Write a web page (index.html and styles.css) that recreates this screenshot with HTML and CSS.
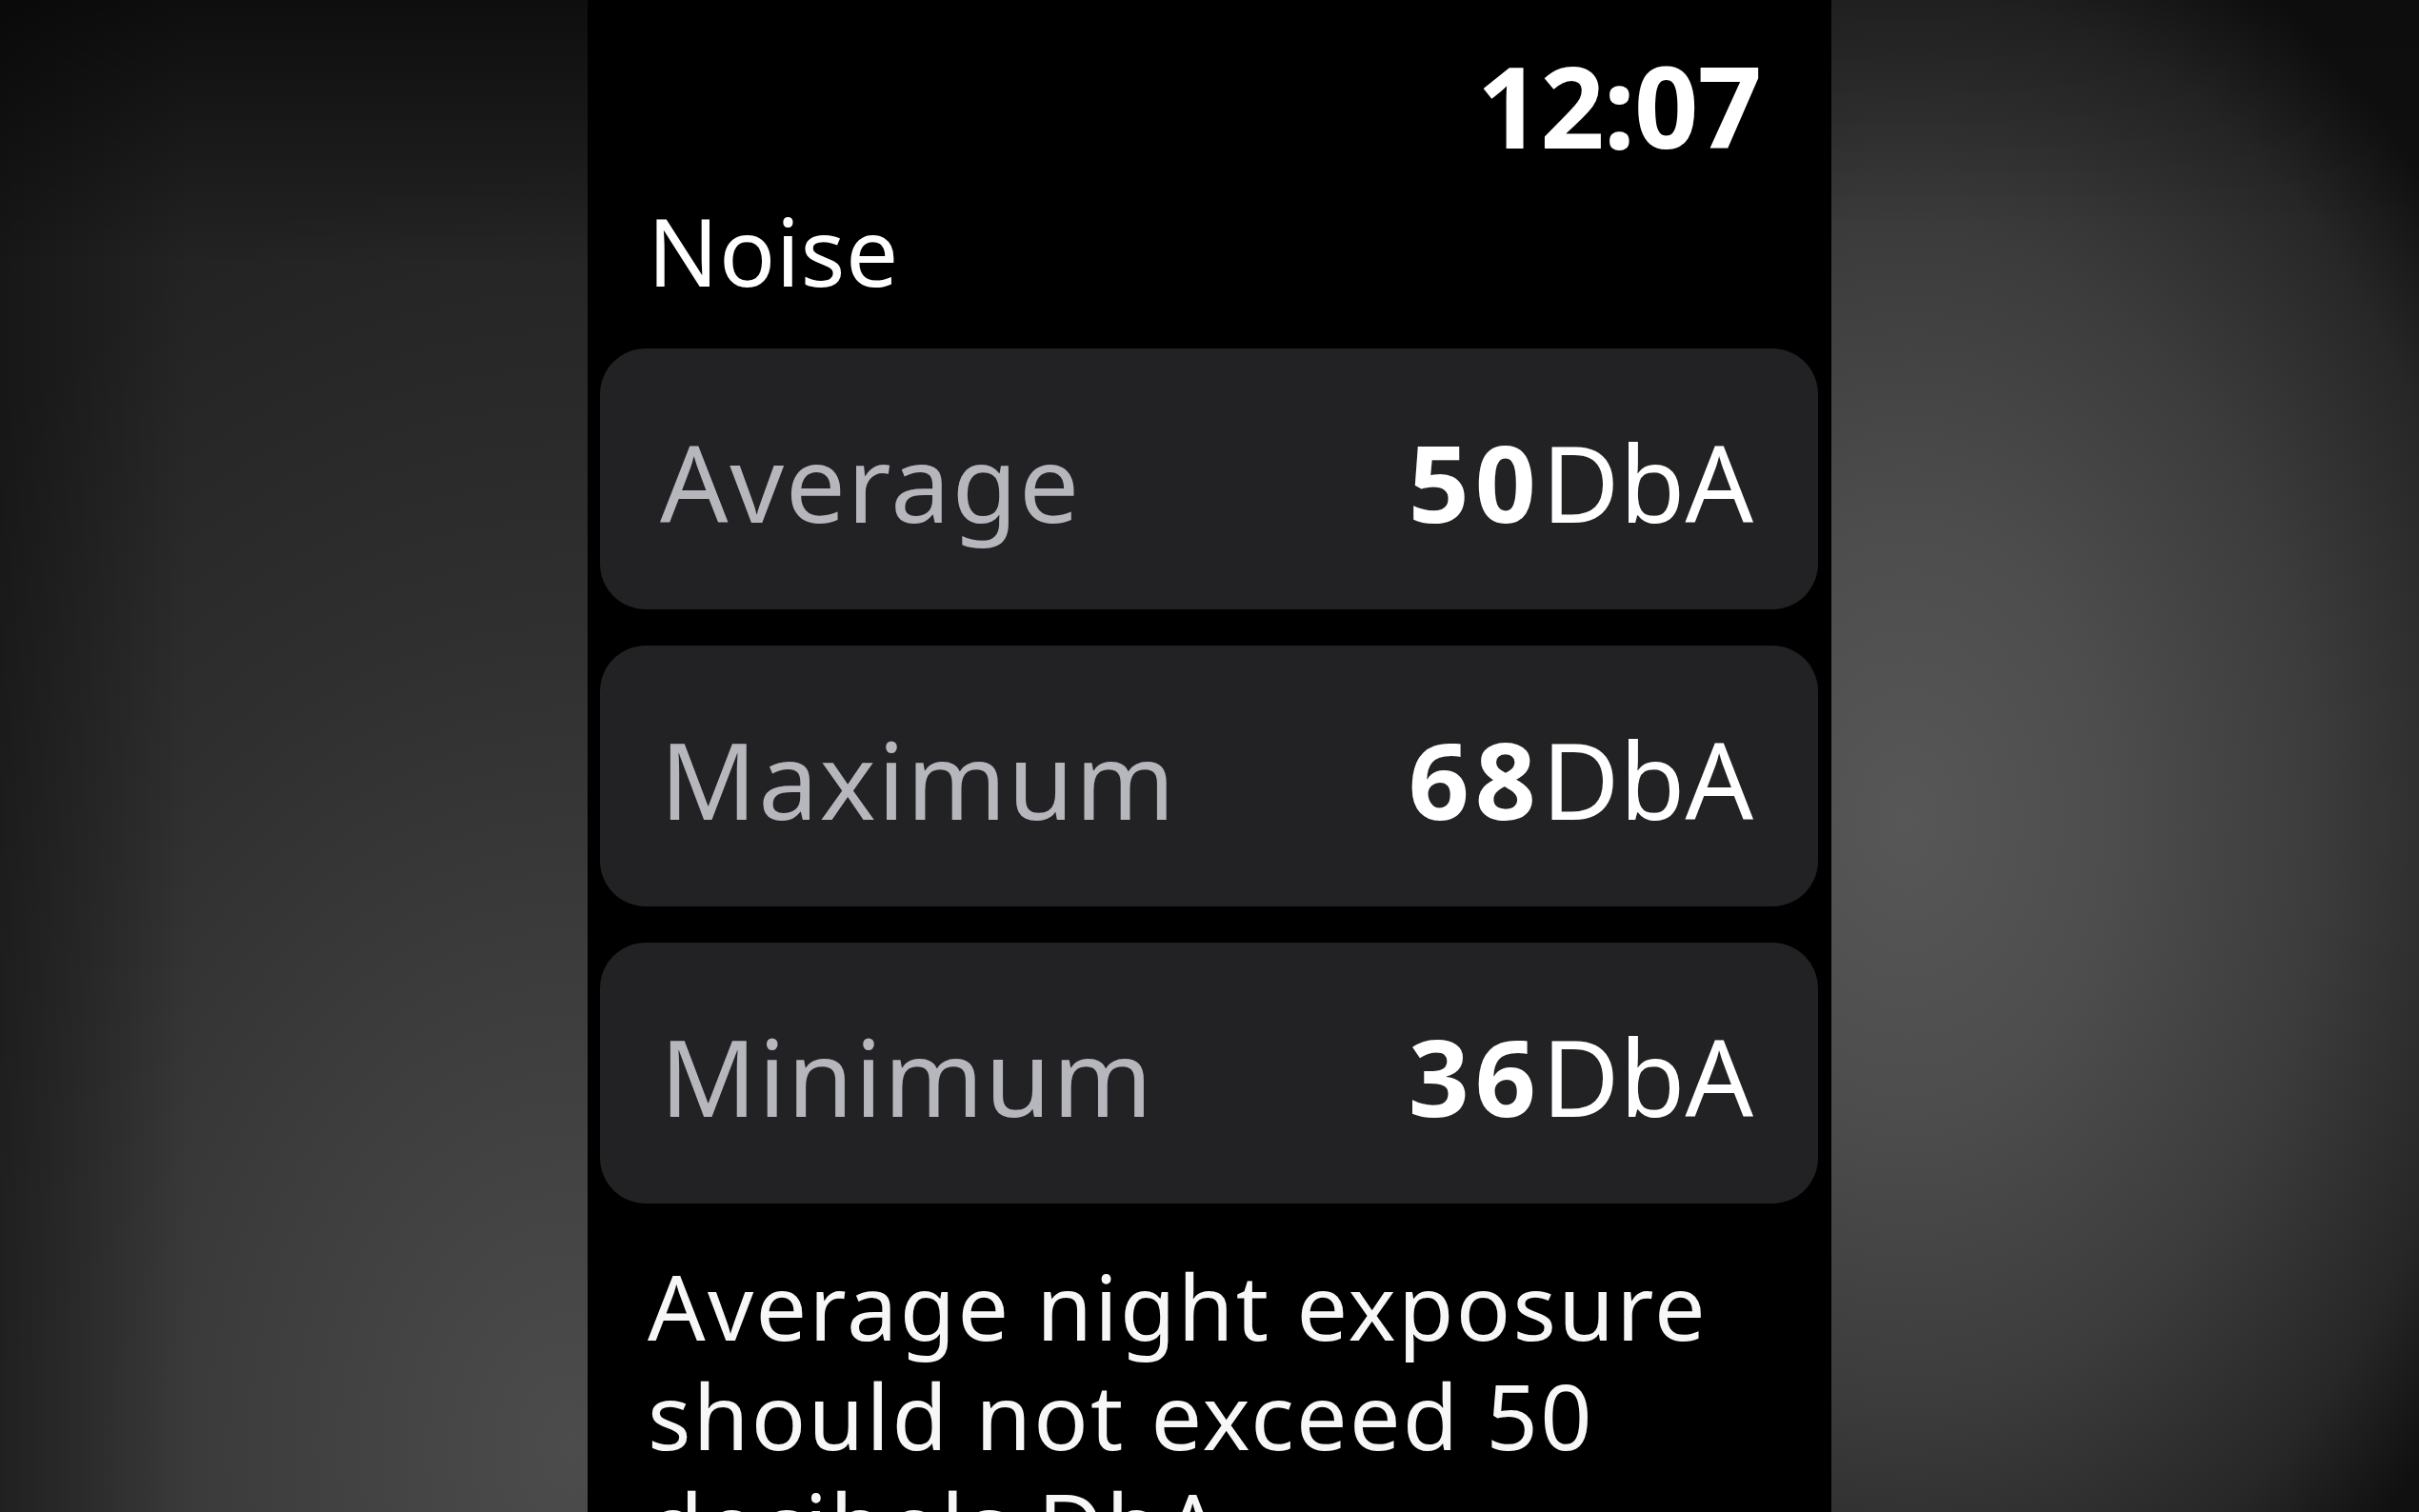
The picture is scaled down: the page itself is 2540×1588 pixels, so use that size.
FILE: index.html
```html
<!DOCTYPE html>
<html lang="en">
<head>
<meta charset="utf-8">
<title>Noise</title>
<link rel="stylesheet" href="styles.css">
</head>
<body>
<div class="stage">
  <div class="side side-left"></div>
  <main class="watch">
    <div class="time">12:07</div>
    <h1 class="title">Noise</h1>
    <div class="cards">
      <div class="card">
        <span class="label">Average</span>
        <span class="value"><b>50</b>DbA</span>
      </div>
      <div class="card">
        <span class="label">Maximum</span>
        <span class="value"><b>68</b>DbA</span>
      </div>
      <div class="card">
        <span class="label">Minimum</span>
        <span class="value"><b>36</b>DbA</span>
      </div>
    </div>
    <p class="note">Average night exposure should not exceed 50 decibels DbA.</p>
  </main>
  <div class="side side-right"></div>
</div>
</body>
</html>
```

FILE: styles.css
```css
html, body {
  margin: 0;
  padding: 0;
  background: #000;
}

body {
  font-family: "Noto Sans", "Open Sans", "Liberation Sans", sans-serif;
  color: #fff;
}

.stage {
  display: flex;
  height: 1588px;
  overflow: hidden;
}

.side {
  height: 100%;
}

.side-left {
  flex: 0 0 617px;
  background:
    linear-gradient(to bottom, rgba(0, 0, 0, 0.6) 0px, rgba(0, 0, 0, 0) 280px),
    linear-gradient(to right, rgba(0, 0, 0, 0.35) 0px, rgba(0, 0, 0, 0) 200px),
    radial-gradient(ellipse 1000px 1350px at 600px 1520px, #4c4c4c 0%, #3d3d3d 35%, #2f2f2f 65%, #232323 100%);
}

.side-right {
  flex: 1 1 auto;
  background:
    linear-gradient(to bottom, rgba(0, 0, 0, 0.2) 0px, rgba(0, 0, 0, 0) 240px),
    radial-gradient(ellipse 720px 1020px at 80px 860px, #575757 0%, #4d4d4d 30%, #3c3c3c 60%, #272727 85%, #101010 100%);
}

.watch {
  flex: 0 0 1306px;
  box-sizing: border-box;
  height: 1588px;
  background: #000;
  padding-top: 52px;
  display: flex;
  flex-direction: column;
  overflow: hidden;
}

.time {
  font-weight: 700;
  font-size: 118px;
  line-height: 118px;
  text-align: right;
  padding-right: 74px;
  letter-spacing: -1px;
}

.title {
  margin: 44px 0 0 0;
  padding-left: 63px;
  font-weight: 400;
  font-size: 98px;
  line-height: 98px;
  letter-spacing: 0.5px;
}

.cards {
  margin: 54px 14px 0 13px;
  display: flex;
  flex-direction: column;
  gap: 38px;
}

.card {
  box-sizing: border-box;
  height: 274px;
  padding: 84px 68px 0 63px;
  background: #222224;
  border-radius: 48px;
  display: flex;
  justify-content: space-between;
  align-items: flex-start;
  font-size: 112px;
  line-height: 112px;
}

.label {
  color: #b6b6bd;
  font-weight: 400;
  letter-spacing: 1.6px;
}

.value {
  color: #fff;
  font-weight: 400;
}

.value b {
  font-weight: 700;
  letter-spacing: 6px;
}

.note {
  margin: 50px 0 0 0;
  padding: 0 60px 0 63px;
  font-size: 95px;
  line-height: 115px;
  letter-spacing: 2.3px;
  color: #f7f7f7;
}
```
